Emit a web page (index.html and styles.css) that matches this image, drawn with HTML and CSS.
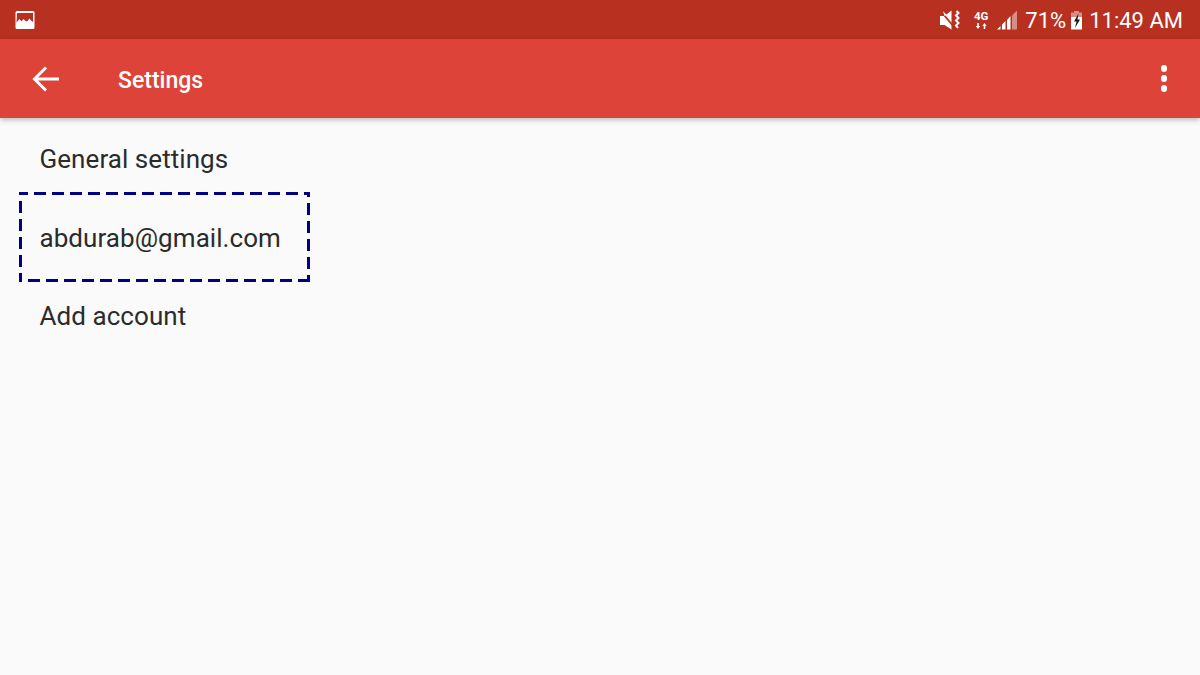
FILE: index.html
```html
<!DOCTYPE html>
<html lang="en">
<head>
<meta charset="UTF-8">
<title>Settings</title>
<link rel="stylesheet" href="styles.css">
</head>

<body>
<div class="statusbar">
<svg class="pic" width="20" height="20" viewBox="0 0 20 20">
<path fill="#fff" d="M2 1h16a1.500 1.500 0 0 1 1.500 1.500v15a1.500 1.500 0 0 1-1.500 1.500h-16a1.500 1.500 0 0 1-1.500-1.500v-15a1.500 1.500 0 0 1 1.500-1.500z"/>
<path fill="#b83020" d="M2 3h16v9l-1.500-1-2-2.500-2.500 3-1.500-.5-2-2-2 2.500-2-2.500-2.500 3-.500 1z"/>
</svg>
<div class="status-right">
<svg class="mute" width="24" height="20" viewBox="0 0 24 20">
<path fill="#fff" d="M2 6h4.500l7-5.500v19l-7-4.500h-4.500z"/>
<path stroke="#b83020" stroke-width="1.800" d="M1 -1l15 18"/>
<path fill="#fff" d="M5 1l3.500 4-2 1z"/>
<path fill="none" stroke="#fff" stroke-width="2" d="M18.500 1l2 2-2.500 2.500 2.500 2.500-2.500 2.500 2.500 2.500-2.500 2.500 2 2.500"/>
</svg>
<svg class="net" width="16" height="20" viewBox="0 0 16 20">
<text x="0" y="9.500" class="net-label">4G</text>
<path fill="#fff" d="M4 19l-2.200-3h1.400v-3h1.600v3h1.400zM10.500 13l2.200 3h-1.400v3h-1.600v-3h-1.400z"/>
</svg>
<svg class="signal" width="20" height="20" viewBox="0 0 20 20">
<path fill="#fff" opacity="0.45" d="M15 5.500l5-5v19h-5z"/>
<path fill="#fff" d="M0 19.500l3.500-3.500v3.500zM5 19.500v-5l3.500-3.500v8.500zM10 19.500v-9.500l3.500-4v13.500z"/>
</svg>
<span class="battery-pct">71%</span>
<svg class="battery" width="13" height="20" viewBox="0 0 13 20">
<path fill="#fff" opacity="0.45" d="M4 1h5v1.500h3v5h-11v-5h3z"/>
<path fill="#fff" d="M1 7h11v12.500h-11z"/>
<path fill="#1c1c1c" d="M8.500 3.500l-4.500 8h2.500l-1.500 6.500 5-8.500h-2.500z"/>
</svg>
<span class="clock">11:49 AM</span>
</div>
</div>

<div class="toolbar">
<svg class="back" width="30" height="30" viewBox="0 0 30 30">
<path fill="none" stroke="#fff" stroke-width="3" d="M29 15h-24M16 3.500l-11.500 11.500 11.500 11.500"/>
</svg>
<span class="title">Settings</span>
<div class="overflow">
<i></i><i></i><i></i>
</div>
</div>

<div class="list">
<div class="item">General settings</div>
<div class="item focused">abdurab@gmail.com</div>
<div class="item">Add account</div>
</div>
</body>
</html>
```

FILE: styles.css
```css
*{
    box-sizing:border-box;
    padding:0;
    margin:0;
}
body{
    font-family:Roboto, sans-serif;
    width:1200px;
    height:675px;
    overflow:hidden;
    background:#fafafa;
}
.statusbar{
    height:39px;
    background:#b83020;
    display:flex;
    align-items:center;
    justify-content:space-between;
    padding:0 17px 0 15px;
    color:#fff;
}
.status-right{
    display:flex;
    align-items:center;
}
.mute{
    margin-right:12px;
}
.net{
    margin-right:7px;
}
.net-label{
    font-size:11.5px;
    font-weight:700;
    fill:#fff;
    font-family:Roboto, sans-serif;
}
.signal{
    margin-right:8px;
}
.battery-pct{
    font-size:22px;
    margin-right:4px;
    margin-top:2px;
}
.battery{
    margin-right:6px;
}
.clock{
    font-size:22px;
    margin-top:2px;
}
.toolbar{
    height:79px;
    background:#dd4339;
    display:flex;
    align-items:center;
    padding:0 30px;
    box-shadow:0 2px 5px rgba(0,0,0,0.25);
    position:relative;
}
.title{
    margin-left:58px;
    margin-top:3px;
    font-size:23px;
    font-weight:500;
    color:#fff;
}
.overflow{
    margin-left:auto;
    margin-right:3px;
    display:flex;
    flex-direction:column;
    gap:3.5px;
}
.overflow i{
    width:6.500px;
    height:6.500px;
    border-radius:50%;
    background:#fff;
}
.list{
    padding:2px 0 0 19px;
}
.item{
    width:291px;
    height:79px;
    line-height:79px;
    padding-left:20.5px;
    font-size:26px;
    letter-spacing:0.06px;
    color:#2b2b2b;
}
/* dashes drawn by hand so the phase matches: 12 on, 6 off */
.focused{
    height:90px;
    line-height:92px;
    margin-top:-7px;
    margin-bottom:-5px;
    background:
        repeating-linear-gradient(to right, #000080 0 9px, transparent 9px 15px, #000080 15px 18px) top left / 100% 3px no-repeat,
        repeating-linear-gradient(to right, #000080 0 3px, transparent 3px 9px, #000080 9px 18px) bottom left / 100% 3px no-repeat,
        repeating-linear-gradient(to bottom, #000080 0 3px, transparent 3px 9px, #000080 9px 18px) top left / 3px 100% no-repeat,
        repeating-linear-gradient(to bottom, #000080 0 5px, transparent 5px 11px, #000080 11px 18px) top right / 3px 100% no-repeat;
}
```
